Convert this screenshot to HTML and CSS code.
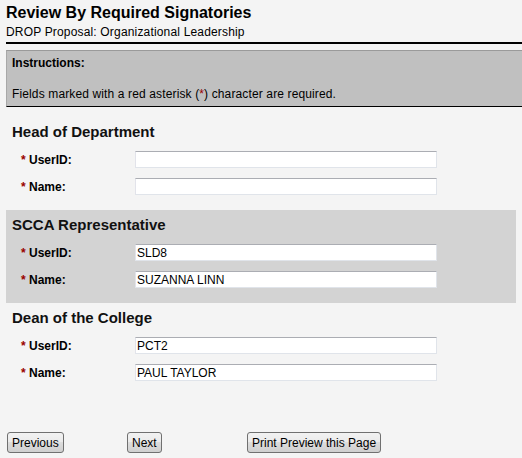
FILE: index.html
```html
<!DOCTYPE html>
<html>
<head>
<meta charset="utf-8">
<title>Review By Required Signatories</title>
<link rel="stylesheet" href="styles.css">
</head>
<body>
<div class="header">
  <h1 class="title">Review By Required Signatories</h1>
  <div class="subtitle">DROP Proposal: Organizational Leadership</div>
</div>
<div class="rule"></div>
<div class="instructions">
  <div class="instr-head">Instructions:</div>
  <div class="instr-text">Fields marked with a red asterisk (<span class="req">*</span>) character are required.</div>
</div>

<div class="section">
  <h2 class="sec-title">Head of Department</h2>
  <div class="row"><label class="lbl"><span class="req">*</span> UserID:</label><input class="field" type="text" value=""></div>
  <div class="row"><label class="lbl"><span class="req">*</span> Name:</label><input class="field" type="text" value=""></div>
</div>

<div class="section shaded">
  <h2 class="sec-title">SCCA Representative</h2>
  <div class="row"><label class="lbl"><span class="req">*</span> UserID:</label><input class="field" type="text" value="SLD8"></div>
  <div class="row"><label class="lbl"><span class="req">*</span> Name:</label><input class="field" type="text" value="SUZANNA LINN"></div>
</div>

<div class="section">
  <h2 class="sec-title">Dean of the College</h2>
  <div class="row"><label class="lbl"><span class="req">*</span> UserID:</label><input class="field" type="text" value="PCT2"></div>
  <div class="row"><label class="lbl"><span class="req">*</span> Name:</label><input class="field" type="text" value="PAUL TAYLOR"></div>
</div>

<div class="buttons">
  <div class="cell"><button class="btn" type="button">Previous</button></div>
  <div class="cell"><button class="btn" type="button">Next</button></div>
  <div class="cell"><button class="btn" type="button">Print Preview this Page</button></div>
</div>
</body>
</html>
```
FILE: styles.css
```css
html, body {
  margin: 0;
  padding: 0;
  background: #f4f4f4;
  font-family: "Liberation Sans", Arial, sans-serif;
  font-size: 12px;
  color: #000;
}

.header {
  padding: 4px 0 0 6px;
}

.title {
  margin: 0;
  font-size: 16px;
  line-height: 18px;
  font-weight: bold;
}

.subtitle {
  margin-top: 3px;
  font-size: 12px;
  line-height: 14px;
  letter-spacing: 0.17px;
}

.rule {
  margin: 3px 0 0 6px;
  border-top: 2px solid #000;
}

.instructions {
  margin: 6px 0 0 6px;
  background: #c0c0c0;
  border-top: 1px solid #9a9a9a;
  border-left: 1px solid #a8a8a8;
  border-bottom: 1px solid #000;
  padding: 5px 5px 5px 5px;
  line-height: 14px;
}

.instr-head {
  font-weight: bold;
}

.instr-text {
  margin-top: 17px;
  letter-spacing: 0.13px;
}

.req {
  color: #990000;
}

.section {
  margin-left: 6px;
  width: 510px;
  padding: 5px 0 10px;
}

.instructions + .section {
  margin-top: 10px;
}

.shaded {
  background: #d3d3d3;
}

.sec-title {
  margin: 0 0 4px;
  padding-left: 6px;
  font-size: 15px;
  line-height: 20px;
  font-weight: bold;
  color: #111;
}

.row {
  display: grid;
  grid-template-columns: 114px 302px;
  align-items: center;
  height: 27px;
  padding-left: 15px;
}

.lbl {
  font-weight: bold;
  font-size: 12px;
}

.field {
  box-sizing: border-box;
  width: 302px;
  height: 17px;
  margin: 0;
  padding: 0 1px;
  background: #fff;
  border: 1px solid #e0e4ea;
  border-top-color: #abadb3;
  border-left-color: #e2e3ea;
  font-family: "Liberation Sans", Arial, sans-serif;
  font-size: 12px;
  color: #000;
  outline: none;
}

.buttons {
  display: grid;
  grid-template-columns: 120px 120px auto;
  margin-top: 36px;
  padding-left: 7px;
}

.btn {
  box-sizing: border-box;
  height: 21px;
  margin: 0;
  padding: 0 4px;
  border: 1px solid #707070;
  border-radius: 3px;
  background: linear-gradient(#f2f2f2 0%, #ebebeb 45%, #dddddd 50%, #cfcfcf 100%);
  font-family: "Liberation Sans", Arial, sans-serif;
  font-size: 12px;
  color: #000;
}
```
